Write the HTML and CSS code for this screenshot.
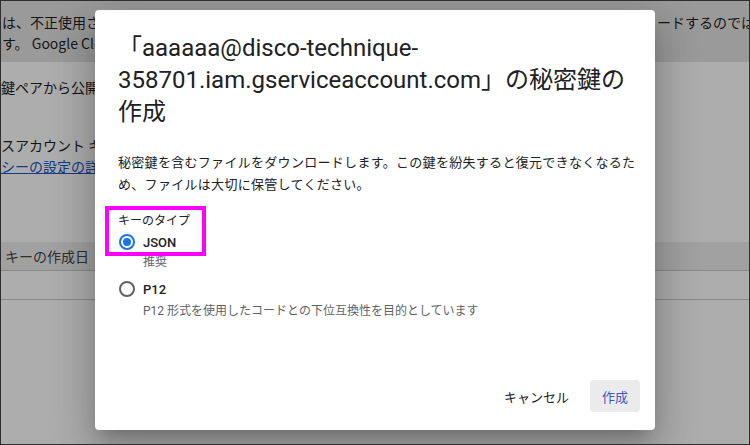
FILE: index.html
```html
<!DOCTYPE html>
<html lang="ja">
<head>
<meta charset="utf-8">
<title>秘密鍵の作成</title>
<link rel="stylesheet" href="styles.css">
</head>
<body>
<div class="screen">
  <div class="page">
    <div class="banner">
      <div class="banner-row">
        <span class="cell">は、不正使用さ</span>
        <span class="cell cell-right">ードするのではな</span>
      </div>
      <div class="banner-row">
        <span class="cell">す。 Google Clou</span>
      </div>
    </div>
    <div class="section">
      <p class="para"><span class="clip">鍵ペアから公開鍵</span></p>
      <p class="para para-gap"><span class="clip">スアカウント キー</span></p>
      <p class="para link"><span class="clip">シーの設定の詳細</span></p>
    </div>
    <div class="table">
      <div class="thead">キーの作成日</div>
      <div class="trow"></div>
    </div>
  </div>
  <div class="scrim"></div>
  <div class="dialog" role="dialog">
    <h1 class="title">「aaaaaa@disco-technique-<br>358701.iam.gserviceaccount.com」の秘密鍵の<br>作成</h1>
    <p class="desc">秘密鍵を含むファイルをダウンロードします。この鍵を紛失すると復元できなくなるた<br>め、ファイルは大切に保管してください。</p>
    <div class="group">
      <div class="group-label">キーのタイプ</div>
      <div class="radio-row">
        <span class="radio radio-on"><span class="dot"></span></span>
        <span class="radio-text">JSON</span>
      </div>
      <div class="hint">推奨</div>
      <div class="radio-row radio-row-gap">
        <span class="radio"></span>
        <span class="radio-text">P12</span>
      </div>
      <div class="hint hint-tight">P12 形式を使用したコードとの下位互換性を目的としています</div>
    </div>
    <div class="actions">
      <button class="btn btn-text">キャンセル</button>
      <button class="btn btn-flat">作成</button>
    </div>
    <div class="highlight"></div>
  </div>
</div>
</body>
</html>
```

FILE: styles.css
```css
* { box-sizing: border-box; }
html, body { margin: 0; padding: 0; }
body {
  width: 750px;
  height: 445px;
  overflow: hidden;
  font-family: Roboto, "Noto Sans CJK JP", sans-serif;
  color: #202124;
}
.screen {
  position: relative;
  width: 750px;
  height: 445px;
  border: 1px solid #2e2e2e;
  overflow: hidden;
  background: #fff;
}
.page {
  display: flex;
  flex-direction: column;
  height: 100%;
  font-family: "Noto Sans CJK JP", sans-serif;
  font-size: 14px;
  color: #1f1f1f;
}
.banner {
  height: 61px;
  background: #e4e4e4;
  padding-top: 11px;
}
.banner-row {
  display: grid;
  grid-template-columns: 654px 1fr;
  height: 21px;
  line-height: 21px;
}
.cell {
  width: 94px;
  white-space: nowrap;
  overflow: hidden;
  padding-left: 1px;
}
.cell-right { width: auto; padding-left: 2px; }
.section {
  padding: 15px 0 0 0;
  height: 180px;
}
.para {
  margin: 0;
  line-height: 21px;
  white-space: nowrap;
  font-size: 14px;
}
.clip {
  display: block;
  width: 94px;
  overflow: hidden;
}
.para-gap { margin-top: 37px; }
.link {
  color: #1a56c9;
  text-decoration: underline;
}
.table { display: flex; flex-direction: column; }
.thead {
  height: 29px;
  line-height: 28px;
  background: #eeeeee;
  border-bottom: 1px solid #cdcdcd;
  padding-left: 4px;
  color: #444;
  font-size: 14px;
}
.trow {
  height: 29px;
  border-bottom: 1px solid #cdcdcd;
}
.scrim {
  position: absolute;
  inset: 0;
  background: rgba(0, 0, 0, 0.32);
}
.dialog {
  position: absolute;
  left: 94px;
  top: 9px;
  width: 560px;
  height: 420px;
  background: #fff;
  border-radius: 4px;
  box-shadow: 0 11px 15px -7px rgba(0,0,0,.2), 0 24px 38px 3px rgba(0,0,0,.14), 0 9px 46px 8px rgba(0,0,0,.12);
  display: flex;
  flex-direction: column;
  padding: 22px 15px 18px 23px;
}
.title {
  margin: 0;
  font-weight: 400;
  font-size: 24px;
  line-height: 32px;
  color: #202124;
  white-space: nowrap;
}
.desc {
  margin: 23px 0 0 0;
  font-family: "Noto Sans CJK JP", sans-serif;
  font-size: 13px;
  letter-spacing: 0.3px;
  line-height: 22px;
  color: #202124;
  white-space: nowrap;
}
.group {
  margin-top: 18px;
  display: flex;
  flex-direction: column;
  font-family: Roboto, "Noto Sans CJK JP", sans-serif;
}
.group-label {
  font-size: 12px;
  line-height: 16px;
  color: #202124;
}
.radio-row {
  display: flex;
  align-items: center;
  height: 24px;
  margin-top: 1px;
}
.radio-row-gap { margin-top: 7px; }
.radio {
  width: 16px;
  height: 16px;
  margin-left: 1px;
  border: 2px solid #5f6368;
  border-radius: 50%;
  display: flex;
  align-items: center;
  justify-content: center;
}
.radio-on { border-color: #1a73e8; }
.dot {
  width: 8px;
  height: 8px;
  border-radius: 50%;
  background: #1a73e8;
}
.radio-text {
  margin-left: 8px;
  font-size: 13px;
  font-weight: 500;
  color: #202124;
}
.hint {
  padding-left: 25px;
  font-size: 12px;
  line-height: 16px;
  color: #5f6368;
}
.hint-tight { margin-top: 2px; }
.actions {
  margin-top: auto;
  display: flex;
  justify-content: flex-end;
  gap: 9px;
}
.btn {
  height: 32px;
  padding: 0 12px;
  border: none;
  border-radius: 4px;
  font-family: "Noto Sans CJK JP", Roboto, sans-serif;
  font-size: 13px;
  background: transparent;
}
.btn-text { color: #202124; }
.btn-flat {
  width: 50px;
  padding: 0;
  background: #ebebeb;
  color: #3f56c4;
}
.highlight {
  position: absolute;
  left: 10px;
  top: 196px;
  width: 101px;
  height: 50px;
  border: 4px solid #ff00ff;
}
```
